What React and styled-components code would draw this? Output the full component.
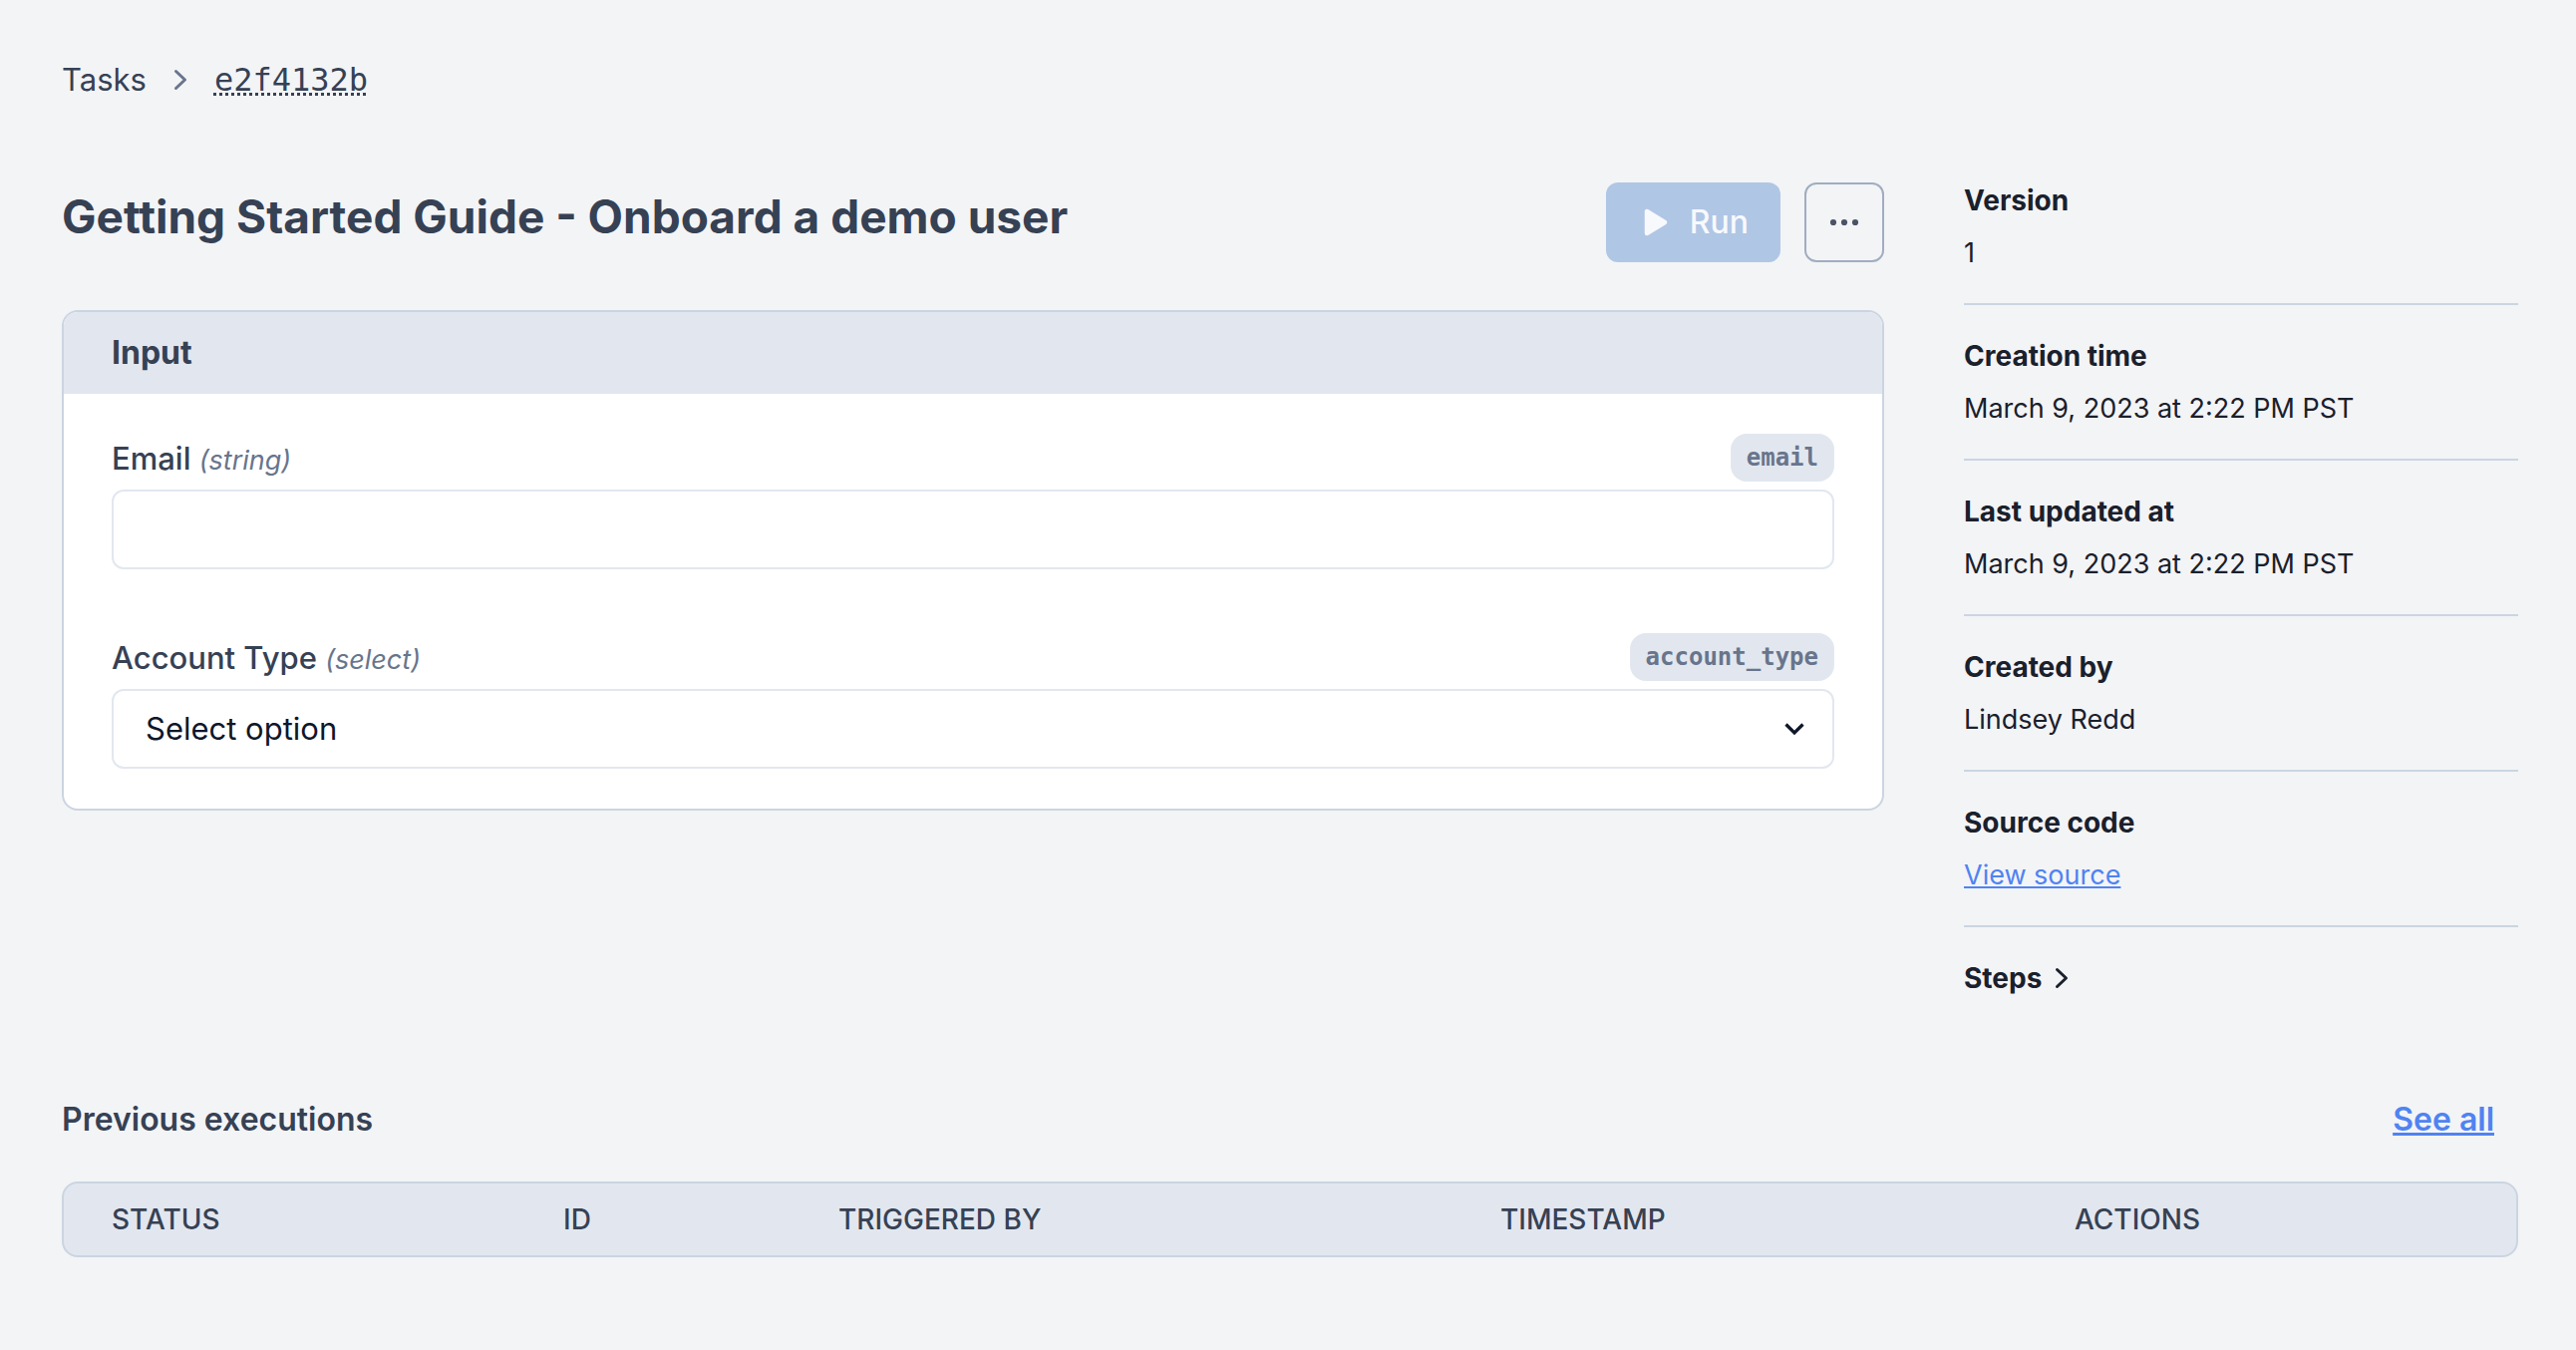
import React from "react";
import styled, { createGlobalStyle } from "styled-components";

const color = {
  page: "#f3f4f6",
  text: "#364154",
  strong: "#1a202c",
  ink: "#0f172a",
  muted: "#68758c",
  line: "#cbd5e1",
  fill: "#e2e7ef",
  link: "#4f83f1",
};

const sans = `Inter, "Liberation Sans", sans-serif`;
const mono = `"DejaVu Sans Mono", "Liberation Mono", monospace`;

const GlobalStyle = createGlobalStyle`
  *, *::before, *::after { box-sizing: border-box; }
  body {
    margin: 0;
    background: ${color.page};
    color: ${color.text};
    font-family: ${sans};
    font-size: 31px;
    line-height: 48px;
    -webkit-font-smoothing: antialiased;
  }
  button, input, select { font: inherit; color: inherit; margin: 0; }
  h1, h2, dl, dd { margin: 0; }
`;

const Page = styled.main`
  padding: 56px 58px 92px 62px;
`;

const Breadcrumbs = styled.nav`
  display: flex;
  align-items: center;
  gap: 18px;
  margin-bottom: 79px;
`;

const Crumb = styled.a`
  color: inherit;
  text-decoration: none;
`;

const IdCrumb = styled(Crumb)`
  font-family: ${mono};
  font-size: 32px;
  text-decoration: underline dotted 3px;
  text-decoration-skip-ink: none;
`;

const Columns = styled.div`
  display: grid;
  grid-template-columns: minmax(0, 1fr) 556px;
  gap: 80px;
  align-items: start;
`;

const TitleRow = styled.div`
  display: flex;
  align-items: flex-start;
  justify-content: space-between;
  gap: 24px;
  margin-bottom: 48px;
`;

const Title = styled.h1`
  font-size: 46px;
  line-height: 68px;
  font-weight: 700;
`;

const Buttons = styled.div`
  display: flex;
  gap: 24px;
`;

const RunButton = styled.button`
  display: flex;
  align-items: center;
  gap: 16px;
  height: 80px;
  padding: 0 32px;
  border: 0;
  border-radius: 12px;
  background: #b0c6e5;
  color: #f8f9fc;
  font-size: 32px;
  font-weight: 500;
`;

const MoreButton = styled.button`
  display: grid;
  place-items: center;
  width: 80px;
  height: 80px;
  padding: 0;
  border: 2px solid #a0adc0;
  border-radius: 12px;
  background: transparent;
`;

const Card = styled.section`
  border: 2px solid ${color.line};
  border-radius: 16px;
  background: #fff;
  overflow: hidden;
`;

const CardHeader = styled.h2`
  padding: 17px 48px;
  background: ${color.fill};
  font-size: 32px;
  font-weight: 700;
`;

const CardBody = styled.form`
  display: grid;
  gap: 64px;
  padding: 40px 48px;
`;

const Field = styled.div`
  display: grid;
  gap: 8px;
`;

const FieldHead = styled.div`
  display: flex;
  align-items: center;
  justify-content: space-between;
`;

const Label = styled.label`
  padding-top: 2px;
  line-height: 46px;
  font-weight: 500;
`;

const Kind = styled.em`
  color: ${color.muted};
  font-size: 27px;
  line-height: 32px;
  font-weight: 400;
`;

const Slug = styled.code`
  padding: 0 16px;
  border-radius: 16px;
  background: ${color.fill};
  color: ${color.muted};
  font-family: ${mono};
  font-size: 24px;
  font-weight: 700;
`;

const TextInput = styled.input`
  width: 100%;
  height: 80px;
  padding: 0 32px;
  border: 2px solid ${color.fill};
  border-radius: 12px;
  background: #fff;
  color: ${color.ink};
`;

const SelectBox = styled.div`
  display: grid;
  align-items: center;

  & > * {
    grid-area: 1 / 1;
  }

  & > svg {
    justify-self: end;
    margin-right: 24px;
    pointer-events: none;
  }
`;

const Select = styled.select`
  appearance: none;
  width: 100%;
  height: 80px;
  padding: 0 80px 0 32px;
  border: 2px solid ${color.fill};
  border-radius: 12px;
  background: #fff;
  color: ${color.ink};
`;

const Details = styled.aside`
  color: ${color.strong};
  font-size: 27px;
  line-height: 36px;
`;

const Detail = styled.div`
  display: grid;
  gap: 17px;
  margin-bottom: 33px;
  padding-bottom: 32px;
  border-bottom: 2px solid ${color.line};
`;

const DetailName = styled.dt`
  font-size: 28px;
  font-weight: 700;
`;

const Link = styled.a`
  color: ${color.link};
  text-decoration: underline;
`;

const StepsButton = styled.button`
  display: flex;
  align-items: center;
  gap: 4px;
  padding: 0;
  border: 0;
  background: none;
  font-size: 28px;
  font-weight: 700;
`;

const SectionHead = styled.div`
  display: flex;
  justify-content: space-between;
  margin: 100px 0 38px;
  padding-right: 24px;
  font-size: 32px;
  font-weight: 600;
`;

const SectionTitle = styled.h2`
  font: inherit;
`;

const Table = styled.table`
  display: block;
  border: 2px solid ${color.line};
  border-radius: 16px;
  background: ${color.fill};

  thead {
    display: block;
  }
`;

const HeadRow = styled.tr`
  display: grid;
  grid-template-columns: 453fr 276fr 664fr 576fr 491fr;
`;

const HeadCell = styled.th`
  padding: 16px 0 16px 48px;
  font-size: 28px;
  line-height: 40px;
  font-weight: 500;
  text-align: left;
`;

const ChevronRight = ({ stroke }) => (
  <svg width="32" height="32" viewBox="0 0 32 32" fill="none" aria-hidden="true">
    <path
      d="M11.5 7.5 20.5 16l-9 8.5"
      stroke={stroke}
      strokeWidth="3"
      strokeLinecap="round"
      strokeLinejoin="round"
    />
  </svg>
);

const ChevronDown = () => (
  <svg width="32" height="32" viewBox="0 0 32 32" fill="none" aria-hidden="true">
    <path d="M7.5 11.5 16 20l8.5-8.5" stroke={color.ink} strokeWidth="3.2" />
  </svg>
);

const PlayIcon = () => (
  <svg width="36" height="36" viewBox="0 0 36 36" aria-hidden="true">
    <path
      d="M9 7v22l18-11z"
      fill="#f8f9fc"
      stroke="#f8f9fc"
      strokeWidth="4.5"
      strokeLinejoin="round"
    />
  </svg>
);

const DotsIcon = () => (
  <svg width="32" height="8" viewBox="0 0 32 8" fill="#4a5464" aria-hidden="true">
    <circle cx="5" cy="4" r="3.1" />
    <circle cx="16" cy="4" r="3.1" />
    <circle cx="27" cy="4" r="3.1" />
  </svg>
);

const details = [
  ["Version", "1"],
  ["Creation time", "March 9, 2023 at 2:22 PM PST"],
  ["Last updated at", "March 9, 2023 at 2:22 PM PST"],
  ["Created by", "Lindsey Redd"],
  ["Source code", <Link href="#source">View source</Link>],
];

const columns = ["STATUS", "ID", "TRIGGERED BY", "TIMESTAMP", "ACTIONS"];

export default function App() {
  return (
    <Page>
      <GlobalStyle />
      <Breadcrumbs aria-label="Breadcrumb">
        <Crumb href="#tasks">Tasks</Crumb>
        <ChevronRight stroke={color.muted} />
        <IdCrumb href="#task">e2f4132b</IdCrumb>
      </Breadcrumbs>

      <Columns>
        <div>
          <TitleRow>
            <Title>Getting Started Guide - Onboard a demo user</Title>
            <Buttons>
              <RunButton type="submit" form="task-input" disabled>
                <PlayIcon />
                Run
              </RunButton>
              <MoreButton type="button" aria-label="More actions">
                <DotsIcon />
              </MoreButton>
            </Buttons>
          </TitleRow>

          <Card>
            <CardHeader>Input</CardHeader>
            <CardBody id="task-input">
              <Field>
                <FieldHead>
                  <Label htmlFor="email">
                    Email <Kind>(string)</Kind>
                  </Label>
                  <Slug>email</Slug>
                </FieldHead>
                <TextInput id="email" type="text" />
              </Field>
              <Field>
                <FieldHead>
                  <Label htmlFor="account_type">
                    Account Type <Kind>(select)</Kind>
                  </Label>
                  <Slug>account_type</Slug>
                </FieldHead>
                <SelectBox>
                  <Select id="account_type">
                    <option>Select option</option>
                  </Select>
                  <ChevronDown />
                </SelectBox>
              </Field>
            </CardBody>
          </Card>
        </div>

        <Details>
          <dl>
            {details.map(([name, value]) => (
              <Detail key={name}>
                <DetailName>{name}</DetailName>
                <dd>{value}</dd>
              </Detail>
            ))}
          </dl>
          <StepsButton type="button">
            Steps
            <ChevronRight stroke={color.strong} />
          </StepsButton>
        </Details>
      </Columns>

      <SectionHead>
        <SectionTitle>Previous executions</SectionTitle>
        <Link href="#executions">See all</Link>
      </SectionHead>
      <Table>
        <thead>
          <HeadRow>
            {columns.map((name) => (
              <HeadCell key={name} scope="col">
                {name}
              </HeadCell>
            ))}
          </HeadRow>
        </thead>
      </Table>
    </Page>
  );
}
